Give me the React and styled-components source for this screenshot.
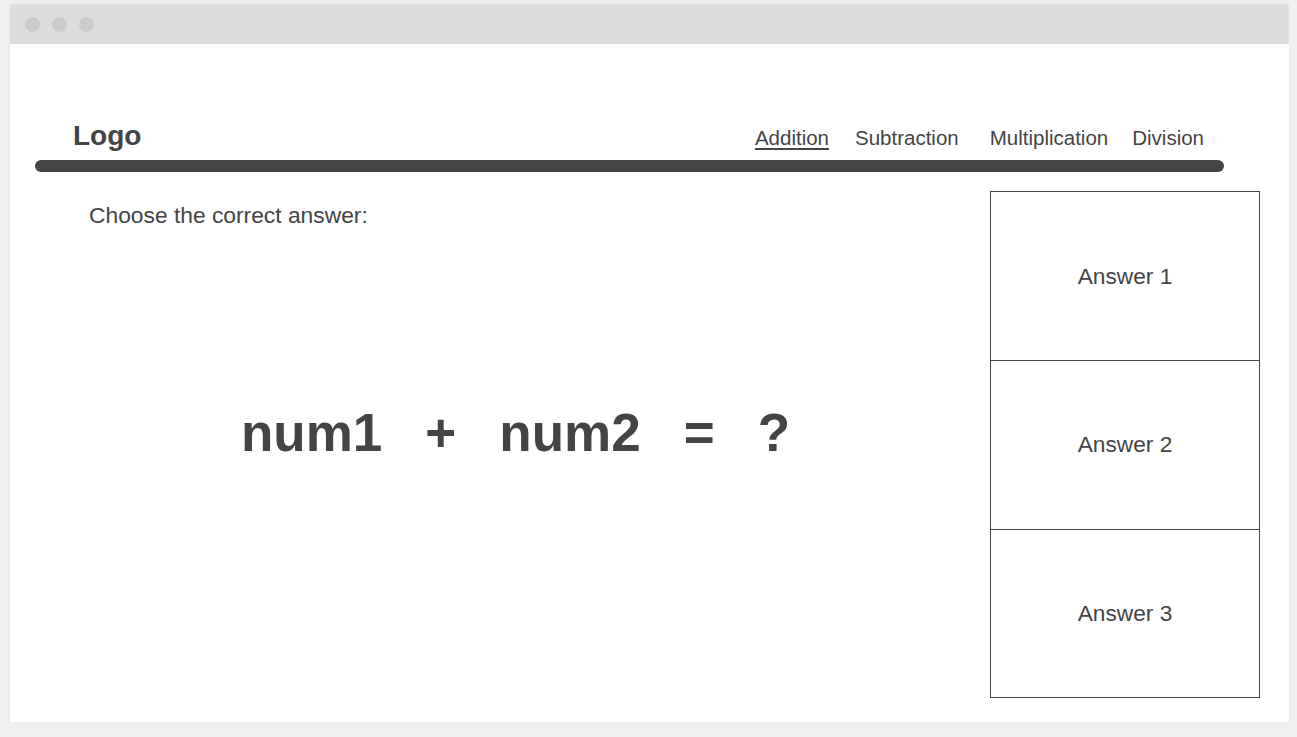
import React from 'react';
import styled, { createGlobalStyle } from 'styled-components';

const GlobalStyle = createGlobalStyle`
  html, body {
    margin: 0;
    padding: 0;
    background: #efefef;
    font-family: "Liberation Sans", Arial, sans-serif;
    color: #444;
  }
`;

const Page = styled.div`
  width: 1297px;
  height: 737px;
  padding: 4px 8px 0 10px;
  box-sizing: border-box;
`;

const Window = styled.div`
  height: 718px;
  background: #fff;
  border-radius: 4px 4px 0 0;
  box-shadow: 0 0 1px rgba(0, 0, 0, 0.18);
  display: flex;
  flex-direction: column;
  overflow: hidden;
`;

const TitleBar = styled.div`
  height: 40px;
  background: #dddddd;
  display: flex;
  align-items: center;
  gap: 12px;
  padding-left: 15px;
  flex-shrink: 0;
`;

const Dot = styled.span`
  width: 15px;
  height: 15px;
  border-radius: 50%;
  background: #cbcbcb;
`;

const Header = styled.header`
  display: flex;
  justify-content: space-between;
  align-items: baseline;
  padding: 77px 85px 0 63px;
`;

const Logo = styled.div`
  font-size: 28px;
  line-height: 30px;
  font-weight: 700;
`;

const Nav = styled.nav`
  display: flex;
  align-items: baseline;
  font-size: 20.5px;
`;

const NavLink = styled.a`
  color: #444;
  text-decoration: ${p => (p.$active ? 'underline' : 'none')};
  text-underline-offset: 3px;
  margin-left: ${p => p.$gap}px;
  cursor: pointer;
`;

const Rule = styled.div`
  height: 12px;
  border-radius: 6px;
  background: #444;
  margin: 9px 65px 0 25px;
  flex-shrink: 0;
`;

const Main = styled.main`
  flex: 1;
  display: flex;
  padding: 19px 29px 24px 25px;
  min-height: 0;
`;

const Question = styled.section`
  flex: 1;
  display: flex;
  flex-direction: column;
  padding-left: 54px;
`;

const Prompt = styled.p`
  margin: 12px 0 0;
  font-size: 22.8px;
  line-height: 25px;
`;

const Equation = styled.div`
  margin: 175px 0 0 -48px;
  display: flex;
  justify-content: center;
  gap: 43px;
  font-size: 53px;
  line-height: 60px;
  font-weight: 700;
`;

const Answers = styled.aside`
  width: 270px;
  box-sizing: border-box;
  border: 1px solid #444;
  display: grid;
  grid-template-rows: repeat(3, 1fr);
`;

const AnswerBox = styled.button`
  border: none;
  border-top: ${p => (p.$first ? 'none' : '1px solid #444')};
  background: #fff;
  font-family: inherit;
  font-size: 22.7px;
  color: #444;
  cursor: pointer;
  padding: 0;
`;

const links = [
  { label: 'Addition', gap: 0, active: true },
  { label: 'Subtraction', gap: 26 },
  { label: 'Multiplication', gap: 31 },
  { label: 'Division', gap: 24 },
];

export default function App() {
  return (
    <>
      <GlobalStyle />
      <Page>
        <Window>
          <TitleBar>
            <Dot />
            <Dot />
            <Dot />
          </TitleBar>
          <Header>
            <Logo>Logo</Logo>
            <Nav>
              {links.map(l => (
                <NavLink key={l.label} $active={l.active} $gap={l.gap}>
                  {l.label}
                </NavLink>
              ))}
            </Nav>
          </Header>
          <Rule />
          <Main>
            <Question>
              <Prompt>Choose the correct answer:</Prompt>
              <Equation>
                <span>num1</span>
                <span>+</span>
                <span>num2</span>
                <span>=</span>
                <span>?</span>
              </Equation>
            </Question>
            <Answers>
              {[1, 2, 3].map(n => (
                <AnswerBox key={n} $first={n === 1}>
                  Answer {n}
                </AnswerBox>
              ))}
            </Answers>
          </Main>
        </Window>
      </Page>
    </>
  );
}
